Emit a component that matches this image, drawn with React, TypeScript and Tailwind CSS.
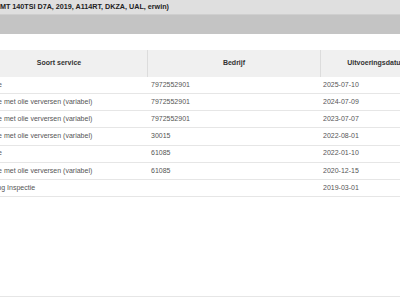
import React from 'react';

type Service = {
  soort: string;
  bedrijf: string;
  datum: string;
};

const services: Service[] = [
  { soort: 'Inspectie', bedrijf: '7972552901', datum: '2025-07-10' },
  { soort: 'Inspectie met olie verversen (variabel)', bedrijf: '7972552901', datum: '2024-07-09' },
  { soort: 'Inspectie met olie verversen (variabel)', bedrijf: '7972552901', datum: '2023-07-07' },
  { soort: 'Inspectie met olie verversen (variabel)', bedrijf: '30015', datum: '2022-08-01' },
  { soort: 'Inspectie', bedrijf: '61085', datum: '2022-01-10' },
  { soort: 'Inspectie met olie verversen (variabel)', bedrijf: '61085', datum: '2020-12-15' },
  { soort: 'Aflevering Inspectie', bedrijf: '', datum: '2019-03-01' },
];

const App: React.FC = () => {
  return (
    <div className="w-[400px] h-[300px] overflow-hidden bg-white font-['Liberation_Sans',Arial,sans-serif]">
      {/* Vehicle title bar */}
      <div className="h-[15px] bg-[#dfdfdf] border-b border-[#cfcfcf] flex items-center">
        <div className="w-[169px] flex justify-end overflow-hidden whitespace-nowrap">
          <span className="text-[7.2px] font-bold text-[#222]">
            (Golf VII 2.0 DSG MT 140TSI D7A, 2019, A114RT, DKZA, UAL, erwin)
          </span>
        </div>
      </div>
      {/* Toolbar strip */}
      <div className="h-[19px] bg-[#c4c4c4]" />
      <div className="h-[16px]" />

      {/* Service history table */}
      <div className="-ml-[29px] w-[462px]">
        <div className="flex h-[27px] bg-[#f0f0f0] text-[7px] font-bold text-[#333]">
          <div className="w-[177px] flex items-center justify-center border-r border-[#dcdcdc]">Soort service</div>
          <div className="w-[173px] flex items-center justify-center border-r border-[#dcdcdc]">Bedrijf</div>
          <div className="w-[112px] flex items-center justify-center whitespace-nowrap">Uitvoeringsdatum</div>
        </div>
        {services.map((s, i) => (
          <div key={i} className="flex h-[17.15px] border-b border-[#e6e6e6] text-[7px] text-[#555] items-center">
            <div className="w-[177px] pl-[3px] whitespace-nowrap">{s.soort}</div>
            <div className="w-[173px] pl-[3px]">{s.bedrijf}</div>
            <div className="w-[112px] pl-[2px]">{s.datum}</div>
          </div>
        ))}
      </div>
      <div className="h-[100px] border-b border-[#e6e6e6]" />
    </div>
  );
};

export default App;
